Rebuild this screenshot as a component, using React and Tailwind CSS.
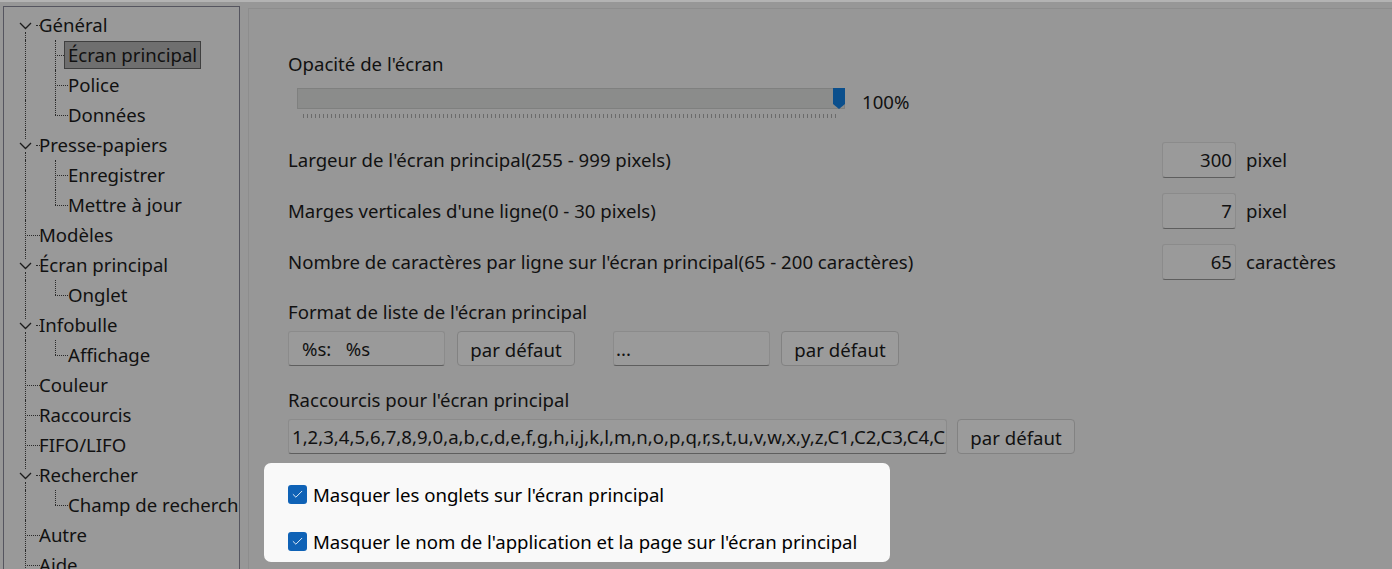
import { Check } from 'lucide-react';

const font = { fontFamily: '"Noto Sans", "Open Sans", sans-serif' };

// level, label, chevron, continues (sibling below at same level)
const nodes = [
  { level: 0, label: 'Général', open: true },
  { level: 1, label: 'Écran principal', selected: true, more: true },
  { level: 1, label: 'Police', more: true },
  { level: 1, label: 'Données' },
  { level: 0, label: 'Presse-papiers', open: true },
  { level: 1, label: 'Enregistrer', more: true },
  { level: 1, label: 'Mettre à jour' },
  { level: 0, label: 'Modèles' },
  { level: 0, label: 'Écran principal', open: true },
  { level: 1, label: 'Onglet' },
  { level: 0, label: 'Infobulle', open: true },
  { level: 1, label: 'Affichage' },
  { level: 0, label: 'Couleur' },
  { level: 0, label: 'Raccourcis' },
  { level: 0, label: 'FIFO/LIFO' },
  { level: 0, label: 'Rechercher', open: true },
  { level: 1, label: 'Champ de recherche' },
  { level: 0, label: 'Autre' },
  { level: 0, label: 'Aide' },
];

function TreeRow({ node, first }) {
  const dots = 'border-dotted border-[#2a2a2a]';
  return (
    <div className="relative flex h-[30px] shrink-0 items-center whitespace-nowrap">
      {/* trunk guide */}
      {node.open ? (
        <>
          {!first && <span className={`absolute left-[21px] top-0 h-[9px] w-0 border-l ${dots}`} />}
          <span className={`absolute left-[21px] top-[22px] bottom-0 w-0 border-l ${dots}`} />
          <span className="absolute left-[15px] top-[12px] text-[#1c1c1c]">
            <svg width="13" height="8" viewBox="0 0 13 8" fill="none" stroke="currentColor" strokeWidth="1.3">
              <path d="M1 1 L6.5 6.5 L12 1" />
            </svg>
          </span>
          <span className={`absolute left-[32px] top-[15px] w-[4px] border-t ${dots}`} />
        </>
      ) : (
        <span className={`absolute left-[21px] top-0 bottom-0 w-0 border-l ${dots}`} />
      )}
      {node.level === 0 && !node.open && (
        <span className={`absolute left-[21px] top-[15px] w-[15px] border-t ${dots}`} />
      )}
      {node.level === 1 && (
        <>
          <span className={`absolute left-[51px] top-0 w-0 border-l ${dots} ${node.more ? 'bottom-0' : 'h-[15px]'}`} />
          <span className={`absolute left-[51px] top-[15px] w-[13px] border-t ${dots}`} />
        </>
      )}
      <span
        className={`relative text-[18.6px] leading-[26px] text-[#111] ${node.level === 0 ? 'ml-[33px] px-px' : 'ml-[60px] px-[3px]'} ${node.selected ? 'border border-[#3f3f3f] bg-[#6f6f6f]' : 'border border-transparent'}`}
      >
        {node.label}
      </span>
    </div>
  );
}

function NumberField({ value, unit }) {
  return (
    <div className="flex items-center gap-[10px]">
      <div className="flex h-[36px] w-[74px] shrink-0 items-center justify-end rounded-[3px] border border-[#8b8b8b] border-b-[#5e5e5e] bg-[#9a9a9a] px-[3px] text-[18.6px] text-[#111]">
        {value}
      </div>
      <span className="whitespace-nowrap text-[18.6px] text-[#111]">{unit}</span>
    </div>
  );
}

function TextField({ value, className }) {
  return (
    <div className={`flex h-[35px] items-center overflow-hidden whitespace-nowrap rounded-[3px] border border-[#8b8b8b] border-b-[#5e5e5e] bg-[#9a9a9a] text-[18.6px] text-[#111] ${className}`}>
      <span className="overflow-hidden">{value}</span>
    </div>
  );
}

function DefaultButton() {
  return (
    <button className="flex h-[35px] w-[118px] items-center justify-center rounded-[4px] border border-[#828282] bg-[#9b9b9b] pt-[2px] text-[18.6px] text-[#111]">
      par défaut
    </button>
  );
}

function CheckRow({ label }) {
  return (
    <div className="flex items-center gap-[6px]">
      <span className="flex h-[19px] w-[19px] items-center justify-center rounded-[3px] bg-[#0f62b6]">
        <Check size={13} strokeWidth={1.6} color="#fff" />
      </span>
      <span className="text-[18.6px] text-black">{label}</span>
    </div>
  );
}

export default function App() {
  const shortcuts = '1,2,3,4,5,6,7,8,9,0,a,b,c,d,e,f,g,h,i,j,k,l,m,n,o,p,q,r,s,t,u,v,w,x,y,z,C1,C2,C3,C4,C5,C';
  return (
    <div className="flex h-[569px] w-[1392px] flex-col overflow-hidden bg-[#979797]" style={font}>
      <div className="h-[2px] shrink-0 bg-[#b3b3b3]" />
      <div className="flex min-h-0 flex-1 pt-[4px]">
        {/* navigation tree */}
        <div className="ml-[3px] flex w-[237px] shrink-0 flex-col overflow-hidden border border-b-0 border-[#55555f] bg-[#999999] pt-[3px]">
          {nodes.map((n, i) => (
            <TreeRow key={i} node={n} first={i === 0} />
          ))}
        </div>

        {/* settings page */}
        <div className="ml-[8px] mt-[2px] flex min-w-0 flex-1 flex-col border-l border-t border-[#8d8d8d] bg-[#979797] pl-[39px] pt-[37px] text-[#111]">
          <div className="text-[18.6px] leading-[36px]">Opacité de l'écran</div>
          <div className="mt-[6px] flex items-center">
            <div className="ml-[9px] flex w-[548px] flex-col">
              <div className="relative h-[21px] border border-[#7f807f] bg-[#8b8c8b]">
                <svg className="absolute right-[-1px] top-[-1px]" width="12" height="21" viewBox="0 0 12 21">
                  <path d="M0 0 H12 V16 L6 21 L0 16 Z" fill="#0b4f8c" />
                </svg>
              </div>
              <div className="mx-[6px] mt-[5px] h-[4px] bg-[repeating-linear-gradient(90deg,#6b6b6b_0_1px,transparent_1px_4px)]" />
            </div>
            <span className="ml-[17px] mt-[-2px] text-[18.6px]">100%</span>
          </div>

          <div className="mt-[24px] flex flex-col gap-[15px] pr-[59px]">
            <div className="flex items-center justify-between">
              <span className="text-[18.6px]">Largeur de l'écran principal(255 - 999 pixels)</span>
              <div className="w-[171px]"><NumberField value="300" unit="pixel" /></div>
            </div>
            <div className="flex items-center justify-between">
              <span className="text-[18.6px]">Marges verticales d'une ligne(0 - 30 pixels)</span>
              <div className="w-[171px]"><NumberField value="7" unit="pixel" /></div>
            </div>
            <div className="flex items-center justify-between">
              <span className="text-[18.6px]">Nombre de caractères par ligne sur l'écran principal(65 - 200 caractères)</span>
              <div className="w-[171px]"><NumberField value="65" unit="caractères" /></div>
            </div>
          </div>

          <div className="mt-[17px] text-[18.6px] leading-[30px]">Format de liste de l'écran principal</div>
          <div className="mt-[4px] flex items-center">
            <TextField value="%s:   %s" className="w-[157px] whitespace-pre pl-[13px]" />
            <div className="ml-[12px]"><DefaultButton /></div>
            <TextField value="..." className="ml-[38px] w-[157px] pl-[2px]" />
            <div className="ml-[11px]"><DefaultButton /></div>
          </div>

          <div className="mt-[19px] text-[18.6px] leading-[30px]">Raccourcis pour l'écran principal</div>
          <div className="mt-[4px] flex items-center">
            <TextField value={shortcuts} className="w-[659px] pl-[3px]" />
            <div className="ml-[10px]"><DefaultButton /></div>
          </div>

          <div className="ml-[-24px] mt-[9px] flex w-[626px] flex-col gap-[19px] rounded-[7px] bg-[#f9f9f9] pb-[6px] pl-[24px] pt-[18px]">
            <CheckRow label="Masquer les onglets sur l'écran principal" />
            <CheckRow label="Masquer le nom de l'application et la page sur l'écran principal" />
          </div>
        </div>
      </div>
    </div>
  );
}
